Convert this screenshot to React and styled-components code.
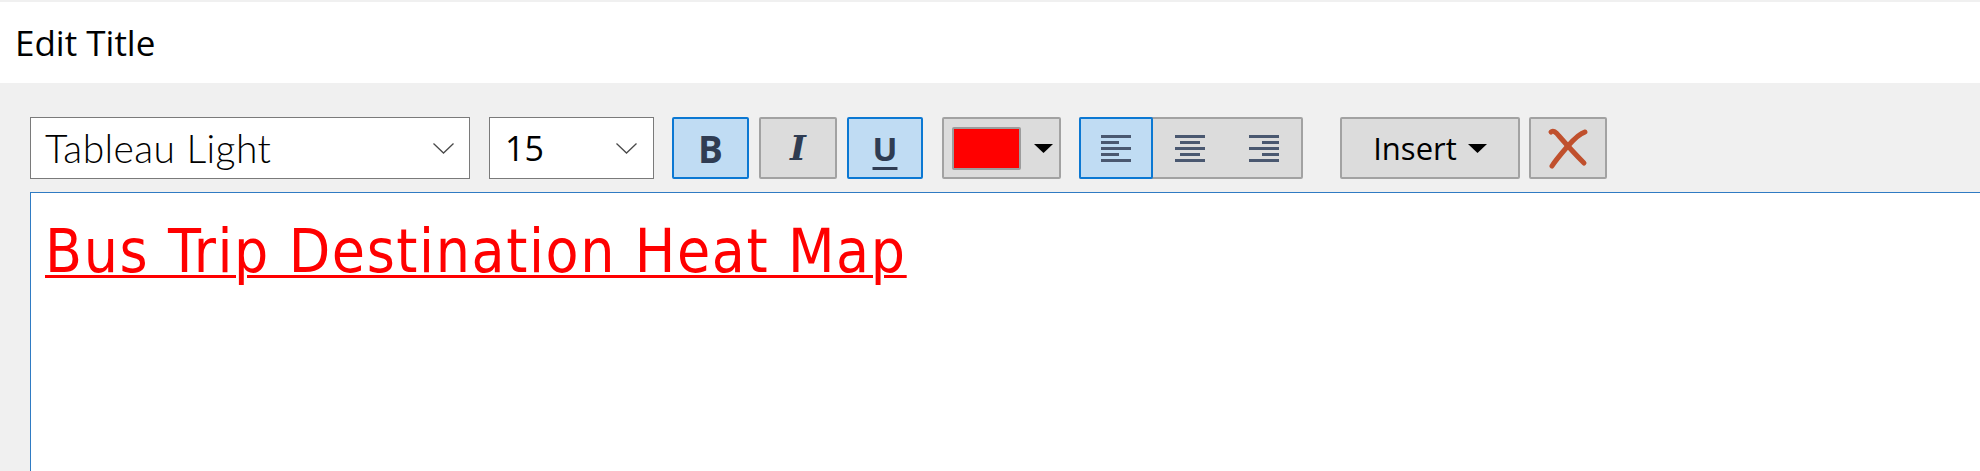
import React from "react";
import styled, { createGlobalStyle } from "styled-components";

const GlobalStyle = createGlobalStyle`
  html, body {
    margin: 0;
    padding: 0;
    background: #f0f0f0;
    overflow: hidden;
  }
  body {
    font-family: "Open Sans", "Liberation Sans", sans-serif;
  }
`;

const Window = styled.div`
  width: 1980px;
  height: 471px;
  box-sizing: border-box;
  padding-top: 2px;
  display: flex;
  flex-direction: column;
  background: #f0f0f0;
`;

const Header = styled.div`
  height: 81px;
  flex-shrink: 0;
  display: flex;
  align-items: center;
  padding-left: 15px;
  background: #ffffff;
  font-family: "Open Sans", sans-serif;
  font-size: 35px;
  color: #000;
`;

const Panel = styled.div`
  flex: 1;
  display: flex;
  flex-direction: column;
  gap: 13px;
  padding: 34px 0 0 30px;
  min-height: 0;
`;

const Toolbar = styled.div`
  display: flex;
  align-items: stretch;
  height: 62px;
  flex-shrink: 0;
`;

const Select = styled.div`
  box-sizing: border-box;
  width: ${(p) => p.width}px;
  margin-right: ${(p) => p.gap}px;
  display: flex;
  align-items: center;
  justify-content: space-between;
  padding: 0 ${(p) => p.padRight}px 0 ${(p) => p.padLeft}px;
  background: #fff;
  border: 1px solid #7a7a7a;
`;

const SelectText = styled.span`
  font-family: ${(p) => p.family};
  font-weight: ${(p) => p.weight || 400};
  font-size: ${(p) => p.size}px;
  letter-spacing: ${(p) => p.spacing || 0}px;
  color: #000;
  line-height: 1;
`;

const Button = styled.div`
  box-sizing: border-box;
  width: ${(p) => p.width}px;
  margin-right: ${(p) => p.gap || 0}px;
  display: flex;
  align-items: center;
  justify-content: center;
  gap: ${(p) => p.inner || 0}px;
  border: 2px solid ${(p) => (p.active ? "#0b78d3" : "#a2a2a2")};
  background: ${(p) => (p.active ? "#c0dcf3" : "#dcdcdc")};
  border-radius: 2px;
`;

const Glyph = styled.span`
  font-family: ${(p) => p.family};
  font-weight: 700;
  font-style: ${(p) => (p.italic ? "italic" : "normal")};
  font-size: ${(p) => p.size}px;
  line-height: 1;
  color: #2f3c52;
`;

const UnderGlyph = styled(Glyph)`
  text-decoration: underline;
  text-decoration-thickness: 3px;
  text-underline-offset: 6px;
`;

const Swatch = styled.div`
  box-sizing: border-box;
  width: 69px;
  height: 43px;
  background: ${(p) => p.color};
  border: 2px solid #9c9c9c;
  border-radius: 2px;
`;

const ColorButton = styled(Button)`
  justify-content: flex-start;
  padding-left: 8px;
  gap: 13px;
`;

const AlignGroup = styled.div`
  box-sizing: border-box;
  width: 224px;
  margin-right: 37px;
  display: flex;
  border: 2px solid #a2a2a2;
  border-radius: 2px;
  background: #dcdcdc;
`;

const AlignSegment = styled.div`
  box-sizing: border-box;
  display: flex;
  align-items: center;
  justify-content: center;
  ${(p) =>
    p.active
      ? `
    width: 74px;
    flex-shrink: 0;
    margin: -2px 0 -2px -2px;
    border: 2px solid #0b78d3;
    border-radius: 2px;
    background: #c0dcf3;
  `
      : `
    flex: 1;
  `}
`;

const InsertLabel = styled.span`
  font-family: "Open Sans", sans-serif;
  font-size: 31px;
  line-height: 1;
  color: #000;
`;

const Editor = styled.div`
  flex: 1;
  background: #fff;
  border-top: 1px solid #2f7bc3;
  border-left: 1px solid #2f7bc3;
  padding: 28px 0 0 14px;
`;

const Title = styled.div`
  display: inline-block;
  font-family: "DejaVu Sans Condensed", "DejaVu Sans", sans-serif;
  font-size: 60px;
  letter-spacing: 1.6px;
  line-height: 1;
  color: #ff0000;
  text-decoration: underline;
  text-decoration-thickness: 3px;
  text-underline-offset: 3px;
`;

function Chevron() {
  return (
    <svg width="21" height="11" viewBox="0 0 21 11">
      <polyline points="0.5,0.5 10.5,10 20.5,0.5" fill="none" stroke="#4a4a4a" strokeWidth="1.3" />
    </svg>
  );
}

function Caret() {
  return (
    <svg width="19" height="9" viewBox="0 0 19 9">
      <polygon points="0,0 19,0 9.5,9" fill="#000" />
    </svg>
  );
}

function AlignIcon({ mode }) {
  const rows = [30, 18, 30, 18, 30];
  return (
    <svg width="30" height="27" viewBox="0 0 30 27">
      {rows.map((w, i) => {
        const sw = mode === "center" && w < 30 ? 20 : mode === "right" && w < 30 ? 17 : w;
        const x = mode === "left" ? 0 : mode === "center" ? (30 - sw) / 2 : 30 - sw;
        return <rect key={i} x={x} y={i * 6} width={sw} height="3" fill="#4a5870" />;
      })}
    </svg>
  );
}

function CloseIcon() {
  return (
    <svg width="42" height="42" viewBox="0 0 42 42">
      <path d="M4 5 C6 3, 9 5, 12 9 C19 17, 28 27, 37 36" fill="none" stroke="#c0502d" strokeWidth="5" strokeLinecap="round" />
      <path d="M38 5 C34 6, 27 12, 20 20 C14 27, 8 34, 5 39" fill="none" stroke="#c0502d" strokeWidth="5" strokeLinecap="round" />
    </svg>
  );
}

export default function App() {
  return (
    <>
      <GlobalStyle />
      <Window>
        <Header>Edit Title</Header>
        <Panel>
          <Toolbar>
            <Select width={440} gap={19} padLeft={14} padRight={15}>
              <SelectText family={'"Lato", sans-serif'} weight={300} size={39} spacing={0.4}>
                Tableau Light
              </SelectText>
              <Chevron />
            </Select>
            <Select width={165} gap={18} padLeft={15} padRight={16}>
              <SelectText family={'"Open Sans", sans-serif'} size={34}>
                15
              </SelectText>
              <Chevron />
            </Select>
            <Button width={77} gap={10} active>
              <Glyph family={'"Open Sans", sans-serif'} size={37}>B</Glyph>
            </Button>
            <Button width={78} gap={10}>
              <Glyph family={'"DejaVu Serif", serif'} size={34} italic>I</Glyph>
            </Button>
            <Button width={76} gap={19} active>
              <UnderGlyph family={'"Open Sans", sans-serif'} size={33}>U</UnderGlyph>
            </Button>
            <ColorButton width={119} gap={18}>
              <Swatch color="#ff0000" />
              <Caret />
            </ColorButton>
            <AlignGroup>
              <AlignSegment active>
                <AlignIcon mode="left" />
              </AlignSegment>
              <AlignSegment>
                <AlignIcon mode="center" />
              </AlignSegment>
              <AlignSegment>
                <AlignIcon mode="right" />
              </AlignSegment>
            </AlignGroup>
            <Button width={180} gap={9} inner={11}>
              <InsertLabel>Insert</InsertLabel>
              <Caret />
            </Button>
            <Button width={78}>
              <CloseIcon />
            </Button>
          </Toolbar>
          <Editor>
            <Title>Bus Trip Destination Heat Map</Title>
          </Editor>
        </Panel>
      </Window>
    </>
  );
}
